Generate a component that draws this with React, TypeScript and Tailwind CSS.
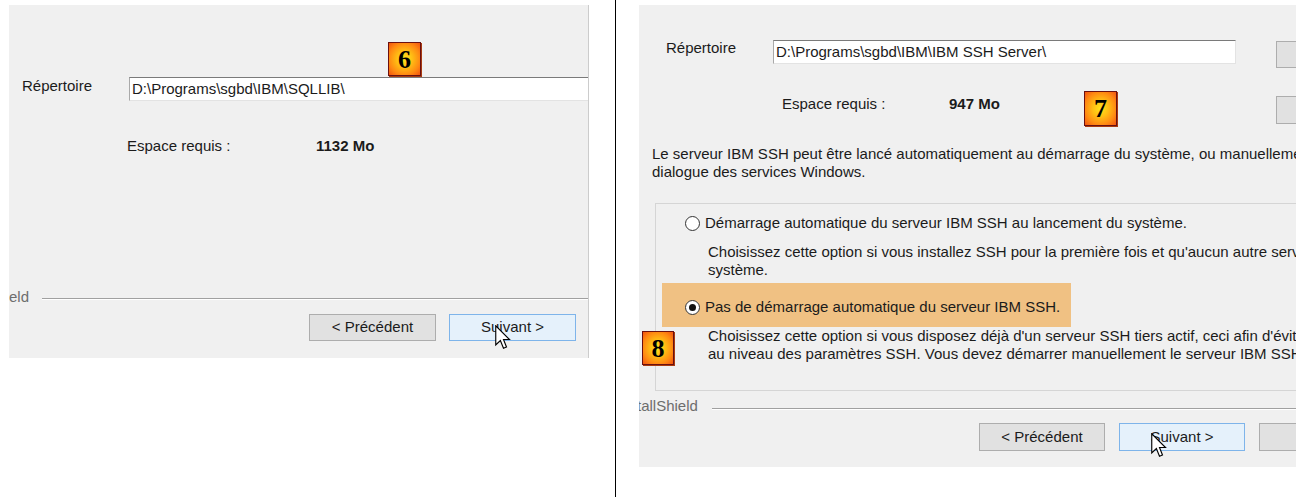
import React from "react";

function Badge({ n, className }: { n: string; className: string }) {
  return (
    <div
      className={`absolute flex items-center justify-center border border-[#6b1010] bg-[radial-gradient(ellipse_at_50%_50%,#ffe41c_0%,#ffbe14_35%,#ff8a12_70%,#f25410_100%)] shadow-[1px_1px_0_#a83a10] font-['Liberation_Serif',serif] text-[26px] font-bold leading-none text-black ${className}`}
    >
      <span className="mt-[1px]">{n}</span>
    </div>
  );
}

function Cursor({ className }: { className: string }) {
  return (
    <svg className={`absolute ${className}`} width="16" height="25" viewBox="0 0 12.8 20">
      <path
        d="M0.6,0.6 L0.6,16 L4.3,12.4 L6.8,18.6 L9.2,17.6 L6.8,11.6 L11.6,11.6 Z"
        fill="#ffffff"
        stroke="#000000"
        strokeWidth="0.9"
        strokeLinejoin="miter"
      />
    </svg>
  );
}

function Radio({ checked }: { checked?: boolean }) {
  return (
    <span className="flex h-[15px] w-[15px] shrink-0 items-center justify-center rounded-full border border-[#333333] bg-white">
      {checked && <span className="h-[7px] w-[7px] rounded-full bg-[#111111]" />}
    </span>
  );
}

export default function App() {
  return (
    <div className="flex h-[497px] w-[1315px] overflow-hidden bg-white font-['Liberation_Sans',Arial,sans-serif] text-[15px] text-[#1b1b1b]">
      {/* Left capture */}
      <div className="w-[615px] shrink-0 pl-[9px] pt-[5px]">
        <div className="relative h-[353px] w-[580px] overflow-hidden border-r border-[#cccccc] bg-[#f0f0f0]">
          <div className="flex flex-col">
            <div className="mt-[72px] flex items-start">
              <div className="ml-[13px] w-[107px] shrink-0 leading-[18px]">Répertoire</div>
              <div className="flex h-[24px] w-[480px] shrink-0 items-center border border-[#a9a9a9] border-t-[#7a7a7a] border-r-[#e3e3e3] border-b-[#e3e3e3] bg-white pl-[2px] leading-[18px]">
                {"D:\\Programs\\sgbd\\IBM\\SQLLIB\\"}
              </div>
            </div>
            <div className="mt-[36px] flex leading-[18px]">
              <div className="ml-[118px] w-[189px] shrink-0">Espace requis :</div>
              <div className="font-bold">1132 Mo</div>
            </div>
            <div className="mt-[133px] flex items-center">
              <div className="shrink-0 leading-[18px] text-[#6d6d6d]">eld</div>
              <div className="ml-[13px] mt-[4px] h-[2px] flex-1 border-t border-b border-[#a0a0a0] border-b-white" />
            </div>
            <div className="mt-[8px] flex">
              <div className="ml-[300px] flex h-[27px] w-[127px] shrink-0 items-center justify-center border border-[#adadad] bg-[#e1e1e1]">
                &lt; Précédent
              </div>
              <div className="ml-[13px] flex h-[27px] w-[127px] shrink-0 items-center justify-center border border-[#7eb4ea] bg-[#e5f1fb]">
                Suivant &gt;
              </div>
            </div>
          </div>
          <Badge n="6" className="left-[379px] top-[37px] h-[34px] w-[33px]" />
          <Cursor className="left-[486px] top-[320px]" />
        </div>
      </div>

      {/* Divider */}
      <div className="h-full w-px shrink-0 bg-black" />

      {/* Right capture */}
      <div className="shrink-0 pl-[23px] pt-[5px]">
        <div className="relative h-[462px] w-[657px] overflow-hidden bg-[#f0f0f0]">
          <div className="flex flex-col">
            <div className="mt-[34px] flex items-start">
              <div className="ml-[27px] w-[107px] shrink-0 leading-[18px]">Répertoire</div>
              <div className="mt-[1px] flex h-[24px] w-[463px] shrink-0 items-center border border-[#a9a9a9] border-t-[#7a7a7a] border-r-[#e3e3e3] border-b-[#e3e3e3] bg-white pl-[2px] leading-[18px]">
                {"D:\\Programs\\sgbd\\IBM\\IBM SSH Server\\"}
              </div>
              <div className="ml-[40px] mt-[2px] h-[27px] w-[75px] shrink-0 border border-[#adadad] bg-[#e1e1e1]" />
            </div>
            <div className="mt-[27px] flex items-start">
              <div className="ml-[143px] w-[167px] shrink-0 leading-[18px]">Espace requis :</div>
              <div className="w-[327px] shrink-0 font-bold leading-[18px]">947 Mo</div>
              <div className="mt-[1px] h-[28px] w-[75px] shrink-0 border border-[#adadad] bg-[#e1e1e1]" />
            </div>
            <div className="ml-[13px] mt-[21px] whitespace-nowrap leading-[18px]">
              <div>Le serveur IBM SSH peut être lancé automatiquement au démarrage du système, ou manuellement via la boîte de</div>
              <div>dialogue des services Windows.</div>
            </div>
            <div className="ml-[16px] mt-[22px] flex h-[188px] w-[700px] shrink-0 flex-col border border-[#d5d5d5]">
              <div className="mt-[10px] flex h-[18px] items-center">
                <span className="ml-[29px]">
                  <Radio />
                </span>
                <span className="ml-[5px] whitespace-nowrap leading-[18px]">
                  Démarrage automatique du serveur IBM SSH au lancement du système.
                </span>
              </div>
              <div className="ml-[52px] mt-[11px] whitespace-nowrap leading-[18px]">
                <div>Choisissez cette option si vous installez SSH pour la première fois et qu'aucun autre serveur SSH n'est installé sur le</div>
                <div>système.</div>
              </div>
              <div className="ml-[6px] mt-[4px] flex w-[409px] items-center bg-[#f0c183] pb-[11px] pl-[23px] pt-[15px]">
                <Radio checked />
                <span className="ml-[5px] whitespace-nowrap leading-[18px]">
                  Pas de démarrage automatique du serveur IBM SSH.
                </span>
              </div>
              <div className="ml-[52px] whitespace-nowrap leading-[18px]">
                <div>Choisissez cette option si vous disposez déjà d'un serveur SSH tiers actif, ceci afin d'éviter les conflits</div>
                <div>au niveau des paramètres SSH. Vous devez démarrer manuellement le serveur IBM SSH.</div>
              </div>
            </div>
            <div className="mt-[6px] flex items-center">
              <div className="ml-[-2px] shrink-0 leading-[18px] text-[#6d6d6d]">tallShield</div>
              <div className="ml-[14px] mt-[6px] h-[2px] flex-1 border-t border-b border-[#a0a0a0] border-b-white" />
            </div>
            <div className="mt-[8px] flex">
              <div className="ml-[340px] flex h-[28px] w-[126px] shrink-0 items-center justify-center border border-[#adadad] bg-[#e1e1e1]">
                &lt; Précédent
              </div>
              <div className="ml-[14px] flex h-[28px] w-[126px] shrink-0 items-center justify-center border border-[#7eb4ea] bg-[#e5f1fb]">
                Suivant &gt;
              </div>
              <div className="ml-[14px] h-[28px] w-[80px] shrink-0 border border-[#adadad] bg-[#e1e1e1]" />
            </div>
          </div>
          <Badge n="7" className="left-[445px] top-[86px] h-[35px] w-[33px]" />
          <Badge n="8" className="left-[3px] top-[326px] h-[34px] w-[32px]" />
          <Cursor className="left-[512px] top-[428px]" />
        </div>
      </div>
    </div>
  );
}
